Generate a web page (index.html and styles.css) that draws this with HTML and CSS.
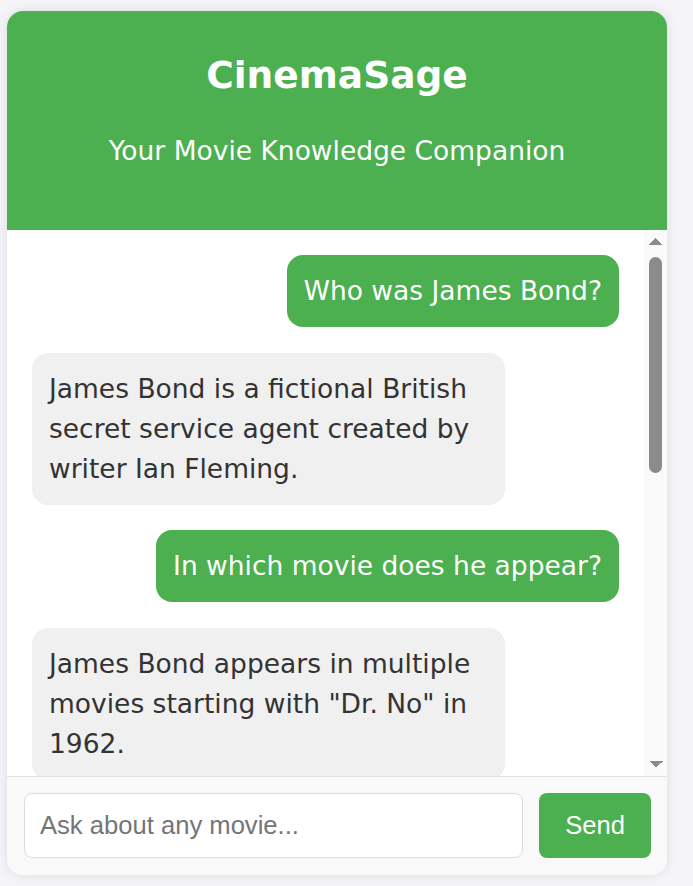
FILE: index.html
```html
<!DOCTYPE html>
<html lang="en">
<head>
<meta charset="utf-8">
<title>CinemaSage</title>
<link rel="stylesheet" href="styles.css">
</head>
<body>
  <div class="app">
    <header class="app-header">
      <h1 class="app-title">CinemaSage</h1>
      <p class="app-subtitle">Your Movie Knowledge Companion</p>
    </header>
    <main class="chat">
      <div class="chat-log">
        <div class="msg msg-user">Who was James Bond?</div>
        <div class="msg msg-bot">James Bond is a fictional British secret service agent created by writer Ian Fleming.</div>
        <div class="msg msg-user">In which movie does he appear?</div>
        <div class="msg msg-bot">James Bond appears in multiple movies starting with "Dr. No" in 1962.</div>
      </div>
      <div class="scrollbar" aria-hidden="true">
        <div class="scrollbar-arrow scrollbar-arrow-up"></div>
        <div class="scrollbar-track">
          <div class="scrollbar-thumb"></div>
        </div>
        <div class="scrollbar-arrow scrollbar-arrow-down"></div>
      </div>
    </main>
    <form class="composer" onsubmit="return false;">
      <input class="composer-input" type="text" placeholder="Ask about any movie...">
      <button class="composer-send" type="submit">Send</button>
    </form>
  </div>
</body>
</html>
```
FILE: styles.css
```css
* { box-sizing: border-box; }

html, body {
  margin: 0;
  height: 100%;
}

body {
  background: #f4f4f9;
  padding: 11px 7px;
  font-family: "DejaVu Sans", "Open Sans", sans-serif;
}

.app {
  width: 660px;
  height: 864px;
  background: #ffffff;
  border-radius: 16px;
  overflow: hidden;
  box-shadow: 0 0 12px rgba(0, 0, 0, 0.1);
  display: flex;
  flex-direction: column;
}

.app-header {
  background: #4caf50;
  color: #ffffff;
  text-align: center;
  padding: 40px 16px 61px;
  flex: none;
}

.app-title {
  margin: 0 0 34px;
  font-size: 37.5px;
  line-height: 48px;
  font-weight: bold;
}

.app-subtitle {
  margin: 0;
  font-size: 26.5px;
  line-height: 36px;
  font-weight: normal;
}

.chat {
  flex: 1;
  min-height: 0;
  display: flex;
  background: #ffffff;
}

.chat-log {
  flex: 1;
  min-width: 0;
  overflow: hidden;
  display: flex;
  flex-direction: column;
  gap: 25.6px;
  padding: 25px;
}

.msg {
  flex: none;
  max-width: 80.6%;
  padding: 16px 17px;
  border-radius: 16px;
  font-size: 26.5px;
  line-height: 40px;
}

.msg-user {
  align-self: flex-end;
  background: #4caf50;
  color: #ffffff;
}

.msg-bot {
  align-self: flex-start;
  background: #f0f0f0;
  color: #333333;
}

/* drawn scrollbar */
.scrollbar {
  flex: none;
  width: 23px;
  display: flex;
  flex-direction: column;
  background: #fafafa;
}

.scrollbar-arrow {
  flex: none;
  height: 23px;
  background-repeat: no-repeat;
  background-position: center;
  background-size: 14px 7px;
}

.scrollbar-arrow-up {
  background-image: conic-gradient(from 135deg at 50% 0, #8b8b8b 90deg, transparent 0);
}

.scrollbar-arrow-down {
  background-image: conic-gradient(from -45deg at 50% 100%, #8b8b8b 90deg, transparent 0);
}

.scrollbar-track {
  flex: 1;
  padding: 4px 5px 0;
}

.scrollbar-thumb {
  height: 216px;
  border-radius: 7px;
  background: #8b8b8b;
}

.composer {
  flex: none;
  display: flex;
  gap: 16px;
  margin: 0;
  padding: 16px 16px 17px 17px;
  border-top: 1px solid #e0e0e0;
  background: #f9f9f9;
}

.composer-input {
  flex: 1;
  min-width: 0;
  height: 65px;
  padding: 0 15px;
  border: 1px solid #dcdcdc;
  border-radius: 8px;
  background: #ffffff;
  font-family: "Liberation Sans", Arial, sans-serif;
  font-size: 25.6px;
  color: #333333;
  outline: none;
}

.composer-input::placeholder {
  color: #757575;
}

.composer-send {
  flex: none;
  height: 65px;
  padding: 0 26px;
  border: none;
  border-radius: 8px;
  background: #4caf50;
  color: #ffffff;
  font-family: "Liberation Sans", Arial, sans-serif;
  font-size: 25.6px;
  cursor: pointer;
}
```
